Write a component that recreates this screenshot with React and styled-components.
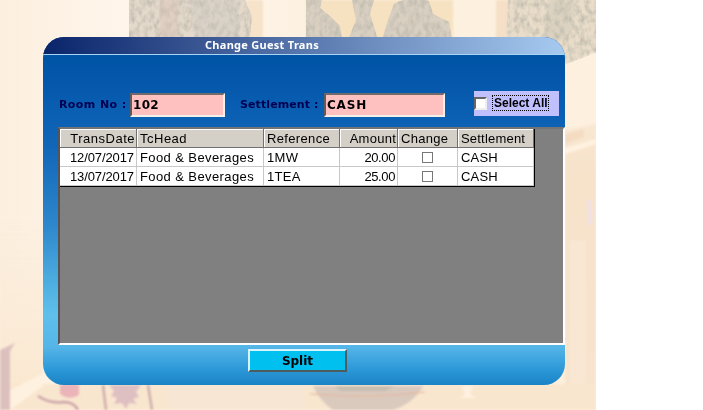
import React from "react";
import styled, { createGlobalStyle } from "styled-components";

const Global = createGlobalStyle`
  * { box-sizing: border-box; }
  html, body { margin: 0; background: #fff; }
  body { overflow: hidden; }
`;

const Page = styled.main`
  position: relative;
  width: 703px;
  height: 410px;
  padding: 37px 0 0 43px;
  background: #fff;
  overflow: hidden;
`;

const Backdrop = styled.svg`
  position: absolute;
  left: 0;
  top: 0;
  display: block;
`;

const Dialog = styled.section`
  position: relative;
  width: 522px;
  height: 348px;
  border-radius: 21px;
  overflow: hidden;
  display: flex;
  flex-direction: column;
  background: linear-gradient(#0054a6 0 18px, #0356a9 40px, #0b5fb3 75px, #1166b8 110px, #2f88cc 190px, #4baade 240px, #60c0eb 278px, #55b5e7 310px, #2d99d8 332px, #1a83c6 348px);
`;

const TitleBar = styled.header`
  height: 18px;
  flex: none;
  padding-left: 162px;
  border-bottom: 1px solid #a9d5f5;
  background: linear-gradient(90deg, #0a246a, #a6caf0);
  color: #fff;
  font: bold 11px/16px "Noto Sans", "Open Sans", sans-serif;
  white-space: nowrap;
`;

const Fields = styled.div`
  display: flex;
  flex: none;
  height: 72px;
  padding: 38px 0 0 16px;
`;

const Label = styled.label`
  width: ${(p) => p.$width}px;
  flex: none;
  margin-left: ${(p) => p.$gap || 0}px;
  padding-top: 4px;
  color: #000050;
  font: bold 11px/16px "DejaVu Sans", sans-serif;
  white-space: nowrap;
`;

const Text = styled.span`
  white-space: nowrap;
  letter-spacing: ${(p) => p.$spacing || 0}px;
`;

const Field = styled.div`
  width: ${(p) => p.$width}px;
  height: 24px;
  flex: none;
  border: 2px solid;
  border-color: #716b6b #f4f0ea #f4f0ea #605a5a;
  padding-left: 1px;
  background: #ffc0c0;
  color: #000;
  font: bold 12px/20px "DejaVu Sans", sans-serif;
`;

const SelectAll = styled.div`
  display: flex;
  flex: none;
  width: 85px;
  height: 25px;
  margin: -2px 0 0 29px;
  padding-top: 4px;
  background: #c0c0ff;
`;

const Check = styled.span`
  width: 13px;
  height: 13px;
  margin-top: 2px;
  border: 2px solid;
  border-color: #666 #eee #eee #666;
  background: #fff;
`;

const FocusText = styled.span`
  width: 57px;
  height: 16px;
  margin-left: 5px;
  padding-left: 1px;
  border: 1px dotted #000;
  font: bold 12px/14px "Liberation Sans", Arial, sans-serif;
  white-space: nowrap;
`;

const GridFrame = styled.div`
  width: 507px;
  height: 218px;
  flex: none;
  margin-left: 15px;
  border: 2px solid;
  border-color: #747474 #fff #fff #555;
  background: #808080;
`;

const Table = styled.div`
  display: grid;
  grid-template-columns: 77px 127px 76px 58px 60px 76px;
  grid-template-rows: 19px 19px 19px;
  width: 475px;
  border-right: 1px solid #000;
  border-bottom: 1px solid #000;
`;

const Cell = styled.div`
  display: flex;
  align-items: center;
  justify-content: ${(p) => p.$align || "flex-start"};
  padding: 1px 2px 0 3px;
  border-right: 1px solid #c8c8c8;
  border-bottom: 1px solid #c8c8c8;
  background: #fff;
  color: #000;
  font: 13px/17px "Liberation Sans", Arial, sans-serif;
  white-space: nowrap;
`;

const HeadCell = styled(Cell)`
  border-color: #707070;
  background: #d4d0c8;
  box-shadow: inset 1px 1px #fff;
  padding-right: 1px;
`;

const Box = styled.span`
  width: 11px;
  height: 11px;
  margin: 0 2px 1px 0;
  border: 1px solid #777;
`;

const SplitButton = styled.button`
  width: 99px;
  height: 23px;
  margin: 4px 0 0 205px;
  padding: 1px 0 0;
  border: 2px solid;
  border-color: #d8f4fc #4e5c60 #4e5c60 #d8f4fc;
  background: #00c0f0;
  color: #000;
  font: bold 12px/19px "DejaVu Sans", sans-serif;
`;

const columns = [
  { name: "TransDate", align: "flex-end", head: 0.5, body: -0.1 },
  { name: "TcHead", head: 0.5, body: 0.4 },
  { name: "Reference", head: 0.35, body: 0.3 },
  { name: "Amount", align: "flex-end", head: 0.25, body: -0.4 },
  { name: "Change", head: 0.3 },
  { name: "Settlement", head: 0.2, body: 0.2 },
];

const rows = [
  ["12/07/2017", "Food & Beverages", "1MW", "20.00", null, "CASH"],
  ["13/07/2017", "Food & Beverages", "1TEA", "25.00", null, "CASH"],
];

function Scenery() {
  return (
    <Backdrop width="596" height="410" viewBox="0 0 596 410" aria-hidden="true">
      <defs>
        <linearGradient id="wall" x2="1">
          <stop offset="0" stopColor="#fcefdf" />
          <stop offset=".2" stopColor="#fff5ea" />
          <stop offset=".5" stopColor="#fdf2e2" />
          <stop offset="1" stopColor="#fcefdc" />
        </linearGradient>
        <linearGradient id="side" x2="0" y2="1">
          <stop offset="0" stopColor="#fbefdd" />
          <stop offset=".35" stopColor="#f7e2ca" />
          <stop offset="1" stopColor="#f7e4cf" />
        </linearGradient>
        <linearGradient id="floor" x2="0" y2="1">
          <stop offset="0" stopColor="#fae9d2" stopOpacity="0" />
          <stop offset="1" stopColor="#fae7cf" />
        </linearGradient>
        <filter id="leaves" x="0" y="0" width="1" height="1" colorInterpolationFilters="sRGB">
          <feTurbulence type="fractalNoise" baseFrequency=".2 .13" numOctaves="3" seed="8" />
          <feColorMatrix values="0 0 0 0 .75  0 0 0 0 .73  0 0 0 0 .68  2 0 0 0 -.75" />
          <feComposite in2="SourceGraphic" operator="in" result="flecks" />
          <feMerge result="foliage"><feMergeNode in="SourceGraphic" /><feMergeNode in="flecks" /></feMerge>
          <feGaussianBlur in="foliage" stdDeviation=".7" />
        </filter>
        <filter id="soft" x="0" y="0" width="1" height="1" colorInterpolationFilters="sRGB">
          <feGaussianBlur stdDeviation="1.1" />
        </filter>
      </defs>
      <rect width="596" height="410" fill="url(#wall)" />
      <g filter="url(#soft)">
        <path d="M245 0H263V40H245Z" fill="#f7e3ca" />
        <path d="M306 0H453V40H306Z" fill="#f6e2c1" />
        <path d="M496 0H510V40H496Z" fill="#f5dfc6" />
      </g>
      <g filter="url(#leaves)">
        <path d="M129 0H245L252 16 250 40H129Z" fill="#e4d9cb" />
        <path d="M306 0h16l-2 8 10 8 10 10 2 14H306zM352 0h22l-4 14 8 26H348l8-20zM394 4q16-9 35-3l4 13 16 8 3 18h-70l5-17z" fill="#d9d0c2" />
        <path d="M508 0H596V53L566 64 550 40H506Z" fill="#e9ddc9" />
      </g>
      <g filter="url(#soft)">
        <path d="M160 0H178V40H160Z" fill="#dac4b9" opacity=".55" />
        <path d="M190 0H238V40H196Z" fill="#ccc9c0" opacity=".4" />
        <path d="M550 0h25l-8 40h-24z" fill="#c8c2b5" opacity=".4" />
        <path d="M565 66L596 52V410H565Z" fill="url(#side)" />
        <path d="M565 66l31-14v72l-31 6z" fill="#fdf0df" />
        <path d="M565 134l19-5v8l-19 7z" fill="#f4dcc3" />
        <path d="M565 148l31-9v5l-31 10z" fill="#fff2e0" />
        <path d="M570 240h16v144h-16z" fill="#f9e7d3" />
        <path d="M587 200h4l2 22-5 4z" fill="#f0e2e4" />
        <path d="M0 220h43v180H0z" fill="url(#floor)" />
        <path d="M0 384H596V410H0Z" fill="#f9e6cf" />
        <path d="M0 350l15-7-5 8v59H0z" fill="#dcc0bd" />
        <path d="M10 390l33-16v12l-33 24z" fill="#fff1df" />
        <path d="M60 385q10-3 19 0v10q-10 6-19-1z" fill="#ebb4b8" />
        <path d="M38 396q12 8 26 6 10 0 14 8" fill="none" stroke="#cda4aa" strokeWidth="2.5" />
        <path d="M103 385l3 25M148 385l4 25" stroke="#cfadab" strokeWidth="2.5" />
        <path d="M109 385h32l-5 7 3 5-6 2 4 5-8-1-3 6-4-6-8 1 3-6-6-2 3-5z" fill="#dec0c2" />
        <path d="M165 385h140v25H170z" fill="#f7e6d4" />
        <path d="M313 386h110q-9 17-30 24h-60q-14-10-20-24z" fill="#dacabe" />
        <path d="M335 386h60l-10 5h-45z" fill="#b9b5a7" opacity=".6" />
        <path d="M310 394q60 5 115-2" fill="none" stroke="#e5b59a" />
        <path d="M461 386h12l-3 8 6 4h-16l5-4z" fill="#fff0df" />
      </g>
    </Backdrop>
  );
}

export default function App() {
  return (
    <>
      <Global />
      <Page>
        <Scenery />
        <Dialog>
          <TitleBar><Text $spacing={0.28}>Change Guest Trans</Text></TitleBar>
          <Fields>
            <Label $width={71}><Text $spacing={0.4}>Room No :</Text></Label>
            <Field $width={95}><Text $spacing={0.3}>102</Text></Field>
            <Label $width={84} $gap={15}><Text $spacing={0.1}>Settlement :</Text></Label>
            <Field $width={121}><Text $spacing={0.8}>CASH</Text></Field>
            <SelectAll><Check /><FocusText><Text>Select All</Text></FocusText></SelectAll>
          </Fields>
          <GridFrame>
            <Table>
              {columns.map((c) => (
                <HeadCell key={c.name} $align={c.align}><Text $spacing={c.head}>{c.name}</Text></HeadCell>
              ))}
              {rows.map((row) => row.map((value, i) => (
                <Cell key={row[0] + i} $align={i === 4 ? "center" : columns[i].align}>
                  {value === null ? <Box /> : <Text $spacing={columns[i].body}>{value}</Text>}
                </Cell>
              )))}
            </Table>
          </GridFrame>
          <SplitButton>Split</SplitButton>
        </Dialog>
      </Page>
    </>
  );
}
